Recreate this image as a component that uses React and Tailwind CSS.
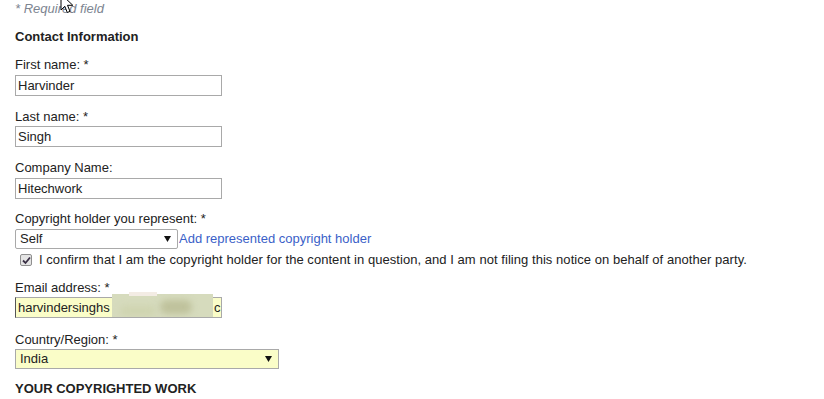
import React from "react";

function Label({ children, className = "" }) {
  return <div className={`h-[16px] leading-[18px] text-[13px] text-[#222] ${className}`}>{children}</div>;
}

function TextBox({ value, className = "", bg = "bg-white" }) {
  return (
    <div
      className={`w-[207px] h-[21px] border border-[#a9a9a9] ${bg} px-[2px] text-[13px] leading-[19px] text-[#222] whitespace-nowrap overflow-hidden ${className}`}
    >
      {value}
    </div>
  );
}

function FakeSelect({ value, width, bg = "bg-white", className = "" }) {
  return (
    <div
      className={`flex items-center justify-between h-[20px] border border-[#a9a9a9] rounded-[2px] ${bg} pl-[4px] pr-[6px] text-[13px] text-[#222] ${className}`}
      style={{ width }}
    >
      <span className="leading-[18px]">{value}</span>
      <svg width="7" height="6" viewBox="0 0 7 6">
        <path d="M0 0 H7 L3.5 6 Z" fill="#111" />
      </svg>
    </div>
  );
}

export default function App() {
  return (
    <div
      className="relative w-[824px] h-[399px] overflow-hidden bg-white pl-[15px]"
      style={{ fontFamily: "'Liberation Sans', Arial, sans-serif" }}
    >
      {/* mouse cursor */}
      <svg className="absolute left-[60px] top-[-7px] z-10" width="15" height="22" viewBox="0 0 15 22">
        <path d="M1 1 L1 17 L4.8 13.3 L7.3 19.5 L10 18.4 L7.5 12.3 L12.8 12.3 Z" fill="#fff" stroke="#000" strokeWidth="1" strokeLinejoin="miter" />
      </svg>

      <div className="flex flex-col">
        <div className="h-[16px] leading-[17px] text-[13px] italic text-[#7d8591]">* Required field</div>

        <Label className="mt-[12px] font-bold">Contact Information</Label>

        <Label className="mt-[12px]">First name: *</Label>
        <TextBox value="Harvinder" className="mt-[3px]" />

        <Label className="mt-[12px]">Last name: *</Label>
        <TextBox value="Singh" className="mt-[2px]" />

        <Label className="mt-[12px]">Company Name:</Label>
        <TextBox value="Hitechwork" className="mt-[3px]" />

        <Label className="mt-[11px]">Copyright holder you represent: *</Label>
        <div className="mt-[3px] flex items-center gap-[1px]">
          <FakeSelect value="Self" width={163} />
          <a className="text-[13px] leading-[16px] text-[#3b5fc8] cursor-pointer">Add represented copyright holder</a>
        </div>

        <div className="mt-[3px] flex items-center h-[16px]">
          <span className="ml-[5px] flex items-center justify-center w-[12px] h-[12px] border border-[#8f8f8f] rounded-[2px] bg-[#e4e4e4]">
            <svg width="9" height="9" viewBox="0 0 9 9">
              <path d="M1 4.5 L3.5 7 L8 1.5" fill="none" stroke="#3a2f45" strokeWidth="1.8" />
            </svg>
          </span>
          <span className="ml-[7px] text-[13px] leading-[18px] text-[#222] tracking-[0.05px]">
            I confirm that I am the copyright holder for the content in question, and I am not filing this notice on behalf of another party.
          </span>
        </div>

        <Label className="mt-[11px]">Email address: *</Label>
        <div className="relative mt-[2px] w-[207px]">
          <TextBox value="harvindersinghs" bg="bg-[#fafdc8]" className="border-l-[#555]" />
          <span className="absolute left-[199px] top-[1px] text-[13px] leading-[19px] text-[#222]">c</span>
          {/* blurred-out part */}
          <div className="absolute left-[97px] top-[-3px] w-[101px] h-[23px] bg-[#d6dbbd] overflow-hidden">
            <div className="absolute left-[48px] top-[6px] w-[32px] h-[14px] rounded-full bg-[#bfc29c] blur-[3px]" />
            <div className="absolute left-[8px] top-[12px] w-[36px] h-[10px] rounded-full bg-[#cfd4b0] blur-[3px]" />
          </div>
          <div className="absolute left-[114px] top-[-5px] w-[28px] h-[4px] bg-[#f3ece4]" />
        </div>

        <Label className="mt-[13px]">Country/Region: *</Label>
        <FakeSelect value="India" width={264} bg="bg-[#fafdc8]" className="mt-[2px] rounded-none" />

        <Label className="mt-[11px] font-bold">YOUR COPYRIGHTED WORK</Label>
      </div>
    </div>
  );
}
